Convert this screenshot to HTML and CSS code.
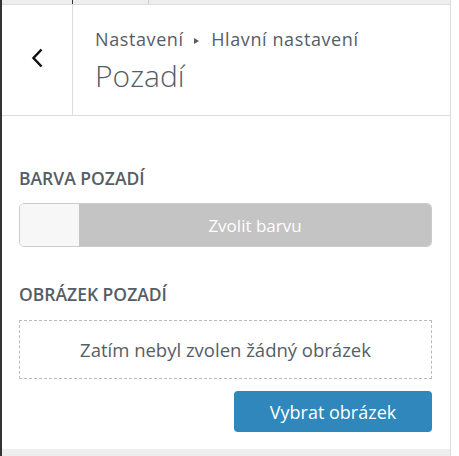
FILE: index.html
```html
<!DOCTYPE html>
<html lang="cs">
<head>
    <meta charset="UTF-8">
    <meta name="viewport" content="width=device-width, initial-scale=1.0">
    <title>Pozadí</title>
    <link rel="stylesheet" href="styles.css">
</head>
<body>
    <div class="panel">
        <div class="topbar">
            <span class="tab tab-first"></span>
            <span class="tab"></span>
        </div>
        <div class="header">
            <button class="back" aria-label="Zpět">
                <svg width="12" height="20" viewBox="0 0 12 20">
                    <polyline points="10.5,1.5 2.5,10 10.5,18.5" fill="none" stroke="#111" stroke-width="2.5"/>
                </svg>
            </button>
            <div class="title-block">
                <div class="crumbs">Nastavení <span class="arrow"></span> Hlavní nastavení</div>
                <h2 class="title">Pozadí</h2>
            </div>
        </div>

        <div class="section">
            <div class="label">Barva pozadí</div>
            <div class="color-picker">
                <span class="swatch"></span>
                <span class="pick">Zvolit barvu</span>
            </div>

            <div class="label label-image">Obrázek pozadí</div>
            <div class="placeholder">Zatím nebyl zvolen žádný obrázek</div>
            <div class="actions">
                <button class="btn">Vybrat obrázek</button>
            </div>
        </div>
        <div class="footer"></div>
    </div>
</body>
</html>
```

FILE: styles.css
```css
body {
    margin: 0;
    background: #fff;
    font-family: 'Open Sans', sans-serif;
    color: #555d66;
}
.panel {
    width: 451px;
    height: 456px;
    box-sizing: border-box;
    border-left: 2px solid #333;
    border-right: 1px solid #ddd;
    display: flex;
    flex-direction: column;
}
.topbar {
    height: 4px;
    background: #eee;
    border-bottom: 1px solid #ddd;
    display: flex;
}
.tab {
    width: 70px;
    border-right: 1px solid #ccc;
}
.tab + .tab {
    width: 75px;
}
.tab-first {
    border-right: 1px solid #333;
}
.header {
    height: 110px;
    display: flex;
    border-bottom: 1px solid #ddd;
}
.back {
    width: 71px;
    border: none;
    border-right: 1px solid #ddd;
    background: #fff;
    display: flex;
    align-items: center;
    justify-content: center;
    padding: 0 0 5px 0;
}
.title-block {
    padding: 22px 0 0 22px;
}
.crumbs {
    font-size: 18px;
    letter-spacing: 0.6px;
    line-height: 24px;
    color: #555d66;
}
.arrow {
    display: inline-block;
    width: 0;
    height: 0;
    border-left: 5px solid #555d66;
    border-top: 3.5px solid transparent;
    border-bottom: 3.5px solid transparent;
    vertical-align: 2px;
    margin: 0 7px 0 5px;
}
.title {
    margin: 6px 0 0;
    font-size: 30px;
    font-weight: 300;
    line-height: 38px;
    color: #555d66;
}
.section {
    padding: 0 18px 0 17px;
    flex: 1;
}
.label {
    margin-top: 51px;
    font-size: 17.5px;
    font-weight: 600;
    text-transform: uppercase;
    line-height: 22px;
    color: #555d66;
}
.label-image {
    margin-top: 36px;
}
.color-picker {
    margin-top: 14px;
    height: 42px;
    display: flex;
    border: 1px solid #ccc;
    border-radius: 5px;
    overflow: hidden;
}
.swatch {
    width: 59px;
    background: #f7f7f7;
}
.pick {
    flex: 1;
    background: #c4c4c4;
    color: #fff;
    font-size: 17px;
    display: flex;
    align-items: center;
    justify-content: center;
}
.placeholder {
    margin-top: 15px;
    height: 57px;
    border: 1px dashed #bbb;
    display: flex;
    align-items: center;
    justify-content: center;
    font-size: 18.5px;
}
.actions {
    display: flex;
    justify-content: flex-end;
    margin-top: 12px;
}
.btn {
    width: 198px;
    height: 41px;
    border: none;
    border-radius: 4px;
    background: #2f87bb;
    color: #fff;
    font-family: 'Open Sans', sans-serif;
    font-size: 18px;
}
.footer {
    height: 7px;
    background: #eee;
}
```
